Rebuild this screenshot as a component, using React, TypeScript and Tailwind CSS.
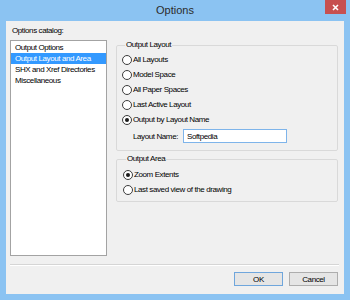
import React from "react";

const catalog = [
  "Output Options",
  "Output Layout and Area",
  "SHX and Xref Directories",
  "Miscellaneous",
];

function Radio({ label, checked }: { label: string; checked?: boolean }) {
  return (
    <div className="flex h-[15px] items-center">
      <span className="flex h-[10px] w-[10px] items-center justify-center rounded-full border border-[#3c3c3c] bg-white">
        {checked && <span className="h-[4px] w-[4px] rounded-full bg-[#1a1a1a]" />}
      </span>
      <span className="ml-[1px]">{label}</span>
    </div>
  );
}

export default function App() {
  return (
    <div className="flex h-[300px] w-[350px] flex-col bg-[#8bc3f2] font-['Liberation_Sans',Arial,sans-serif] text-[8px] leading-[9px] tracking-[-0.4px] text-black">
      {/* title bar */}
      <div className="relative flex h-[21px] shrink-0 items-center justify-center">
        <span className="text-[11px] tracking-normal text-[#2b2b2b]">Options</span>
        <button className="absolute right-[4px] top-0 flex h-[14px] w-[21px] items-center justify-center bg-[#c75050]">
          <svg width="7" height="7" viewBox="0 0 7 7">
            <path d="M1 1 L6 6 M6 1 L1 6" stroke="white" strokeWidth="1.6" />
          </svg>
        </button>
      </div>

      {/* client area */}
      <div className="mx-[6px] mb-[6px] flex flex-1 flex-col bg-[#f0f0f0]">
        <div className="flex">
          <div className="ml-[4px] w-[97px]">
            <div className="h-[19px] pl-[2px] pt-[5px]">Options catalog:</div>
            <div className="h-[216px] border border-[#a3a3a3] bg-white pt-[1px]">
              {catalog.map((item, i) => (
                <div
                  key={item}
                  className={
                    i === 1
                      ? "flex h-[11px] items-center bg-[#3399ff] pl-[4px] text-white"
                      : "flex h-[11px] items-center pl-[4px]"
                  }
                >
                  {item}
                </div>
              ))}
            </div>
          </div>

          <div className="ml-[9px] w-[222px] pt-[18px]">
            <fieldset className="rounded-[2px] border border-[#d9d9d9] pb-[7px] pl-[5px]">
              <legend className="ml-[3px] h-[12px] px-[1px] leading-[12px]">Output Layout</legend>
              <div className="pt-[1px]">
                <Radio label="All Layouts" />
                <Radio label="Model Space" />
                <Radio label="All Paper Spaces" />
                <Radio label="Last Active Layout" />
                <Radio label="Output by Layout Name" checked />
                <div className="mt-[2px] flex h-[14px] items-center">
                  <span className="ml-[11px] w-[50px]">Layout Name:</span>
                  <div className="flex h-[14px] w-[104px] items-center border border-[#7eb4ea] bg-white pl-[3px]">
                    Softpedia
                  </div>
                </div>
              </div>
            </fieldset>

            <fieldset className="mt-[2px] rounded-[2px] border border-[#d9d9d9] pb-[4px] pl-[6px]">
              <legend className="ml-[3px] h-[12px] px-[1px] leading-[12px]">Output Area</legend>
              <div className="pt-[2px]">
                <Radio label="Zoom Extents" checked />
                <Radio label="Last saved view of the drawing" />
              </div>
            </fieldset>
          </div>
        </div>

        <div className="mx-[4px] mt-[8px] w-[329px] border-t border-b border-t-[#d5d5d5] border-b-white" />

        <div className="mr-[6px] mt-[6px] flex justify-end gap-[6px]">
          <button className="flex h-[14px] w-[49px] items-center justify-center border border-[#6fa6dc] bg-[#e5e5e5]">
            OK
          </button>
          <button className="flex h-[14px] w-[49px] items-center justify-center border border-[#adadad] bg-[#e5e5e5]">
            Cancel
          </button>
        </div>
      </div>
    </div>
  );
}
